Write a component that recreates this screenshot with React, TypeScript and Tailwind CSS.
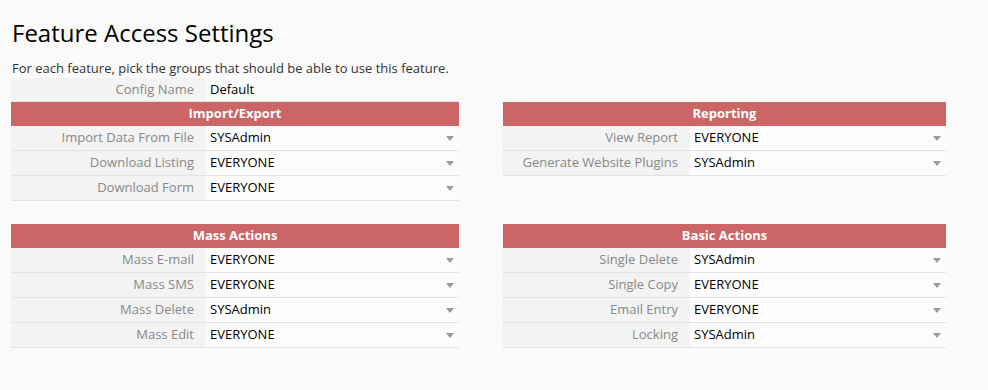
import React from "react";

type Row = { label: string; value: string };

const Caret = () => (
  <svg width="8" height="5" viewBox="0 0 8 5" className="shrink-0">
    <path d="M0 0 L8 0 L4 5 Z" fill="#9a9a9a" />
  </svg>
);

const Section = ({
  title,
  rows,
  width,
  labelWidth,
}: {
  title: string;
  rows: Row[];
  width: string;
  labelWidth: string;
}) => {
  return (
    <div className={width}>
      {/* Section header */}
      <div className="h-6 bg-[#cc6666] text-white text-[13px] font-bold flex items-center justify-center">
        {title}
      </div>
      {rows.map((r) => (
        <div key={r.label} className="flex h-[25px] border-b border-[#e2e2e2]">
          <div
            className={`${labelWidth} bg-[#f3f3f3] text-[#888] text-[13px] text-right pr-3 flex items-center justify-end`}
          >
            {r.label}
          </div>
          <div className="flex-1 bg-[#fcfcfc] flex items-center justify-between pl-1 pr-[5px] text-[13px] text-black">
            <span>{r.value}</span>
            <Caret />
          </div>
        </div>
      ))}
    </div>
  );
};

export default function App() {
  return (
    <div
      className="w-[988px] h-[390px] bg-[#fafafa] text-black"
      style={{ fontFamily: '"Open Sans", "Liberation Sans", sans-serif' }}
    >
      <div className="pt-[17px] pl-3">
        <h1 className="text-[24px] leading-8 font-normal text-black">Feature Access Settings</h1>
        <p className="text-[13px] mt-[10px] leading-[18px] text-[#333]">
          For each feature, pick the groups that should be able to use this feature.
        </p>
      </div>

      <div className="pl-[11px] mt-px">
        {/* Config Name */}
        <div className="flex h-[24px] w-[448px] border-b border-[#e2e2e2]">
          <div className="w-[195px] bg-[#f3f3f3] text-[#888] text-[13px] pr-3 flex items-center justify-end">
            Config Name
          </div>
          <div className="flex-1 flex items-center pl-1 text-[13px]">Default</div>
        </div>

        <div className="flex gap-[44px]">
          <Section
            title="Import/Export"
            width="w-[448px]"
            labelWidth="w-[195px]"
            rows={[
              { label: "Import Data From File", value: "SYSAdmin" },
              { label: "Download Listing", value: "EVERYONE" },
              { label: "Download Form", value: "EVERYONE" },
            ]}
          />
          <Section
            title="Reporting"
            width="w-[443px]"
            labelWidth="w-[187px]"
            rows={[
              { label: "View Report", value: "EVERYONE" },
              { label: "Generate Website Plugins", value: "SYSAdmin" },
            ]}
          />
        </div>

        <div className="flex gap-[44px] mt-[23px]">
          <Section
            title="Mass Actions"
            width="w-[448px]"
            labelWidth="w-[195px]"
            rows={[
              { label: "Mass E-mail", value: "EVERYONE" },
              { label: "Mass SMS", value: "EVERYONE" },
              { label: "Mass Delete", value: "SYSAdmin" },
              { label: "Mass Edit", value: "EVERYONE" },
            ]}
          />
          <Section
            title="Basic Actions"
            width="w-[443px]"
            labelWidth="w-[187px]"
            rows={[
              { label: "Single Delete", value: "SYSAdmin" },
              { label: "Single Copy", value: "EVERYONE" },
              { label: "Email Entry", value: "EVERYONE" },
              { label: "Locking", value: "SYSAdmin" },
            ]}
          />
        </div>
      </div>
    </div>
  );
}
